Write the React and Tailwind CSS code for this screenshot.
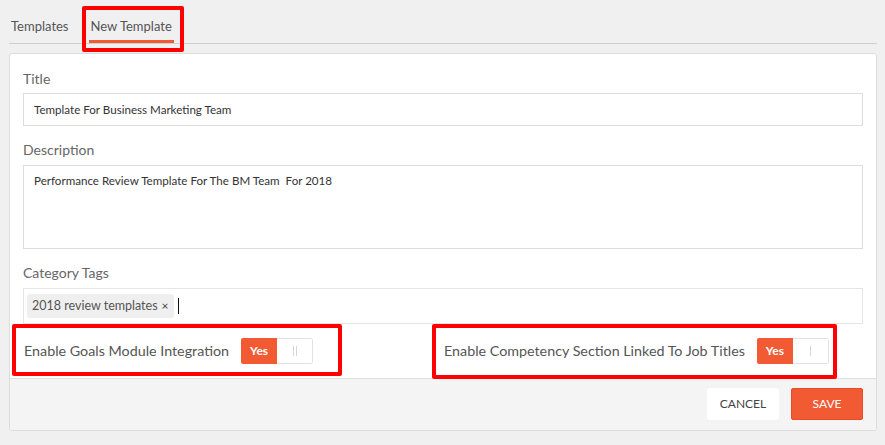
import React from "react";

const orange = "bg-[#f15a33]";

function Toggle({ double }) {
  return (
    <div className="flex h-[26px] w-[72px] rounded-[2px] overflow-hidden">
      <div className={`${orange} w-[36px] flex items-center justify-center text-white text-[12px] font-bold`}>
        Yes
      </div>
      <div className="flex-1 border border-l-0 border-[#e2e2e2] bg-white flex items-center justify-center gap-[2px] rounded-r-[2px]">
        <span className="block w-px h-[10px] bg-[#d6d6d6]" />
        {double && <span className="block w-px h-[10px] bg-[#d6d6d6]" />}
      </div>
    </div>
  );
}

export default function App() {
  return (
    <div
      className="relative h-[445px] w-[885px] bg-[#f0f0f0] pl-[9px] pr-[8px] text-[#555]"
      style={{ fontFamily: "Lato, 'Open Sans', sans-serif" }}
    >
      {/* tabs */}
      <div className="flex items-end h-[44px] border-b border-[#cfcfcf] gap-[18px]">
        <div className="px-[2px] pb-[8px] text-[13px] leading-[18px] text-[#555]">Templates</div>
        <div className="px-[2px] pb-[5px] text-[13px] leading-[18px] text-[#555] border-b-[3px] border-[#f15a33]">
          New Template
        </div>
      </div>

      {/* card */}
      <div className="mt-[9px] bg-white border border-[#ddd] rounded-[3px] overflow-hidden">
        <div className="px-[13px] pt-[16px]">
          <div className="text-[14px] leading-[18px] text-[#666] mb-[5px]">Title</div>
          <div className="h-[33px] border border-[#ddd] px-[10px] flex items-center text-[11.6px] text-[#333]">
            Template For Business Marketing Team
          </div>

          <div className="text-[14px] leading-[18px] text-[#666] mt-[15px] mb-[6px]">Description</div>
          <div className="h-[84px] border border-[#ddd] px-[10px] pt-[7px] text-[11.6px] leading-[16px] text-[#333]">
            Performance Review Template For The BM Team{"\u00a0"} For 2018
          </div>

          <div className="text-[14px] leading-[18px] text-[#666] mt-[15px] mb-[6px]">Category Tags</div>
          <div className="h-[36px] border border-[#e6e6e6] px-[3px] flex items-center gap-[4px]">
            <div className="h-[24px] bg-[#efefef] rounded-[3px] px-[5px] flex items-center gap-[4px] text-[12.5px] text-[#555]">
              2018 review templates <span className="text-[12px] text-[#444]">×</span>
            </div>
            <span className="block w-px h-[16px] bg-[#111]" />
          </div>

          <div className="grid grid-cols-2 h-[54px]">
            <div className="flex items-center gap-[12px] pl-[1px]">
              <span className="text-[14.3px] text-[#555]">Enable Goals Module Integration</span>
              <Toggle double />
            </div>
            <div className="flex items-center gap-[12px] pl-[1px]">
              <span className="text-[14.3px] text-[#555]">Enable Competency Section Linked To Job Titles</span>
              <Toggle />
            </div>
          </div>
        </div>

        {/* footer */}
        <div className="border-t border-[#e0e0e0] bg-[#f4f4f4] h-[52px] pt-[9px] px-[13px] flex justify-end items-start gap-[12px]">
          <button className="h-[32px] w-[72px] bg-white rounded-[3px] text-[12px] text-[#444]">CANCEL</button>
          <button className="h-[32px] w-[72px] bg-[#f15a33] border border-[#e84a22] rounded-[2px] text-[12px] text-white">
            SAVE
          </button>
        </div>
      </div>

      {/* annotation boxes */}
      <div className="absolute left-[82px] top-[6px] w-[102px] h-[46px] border-4 border-[#ff0000] rounded-[2px]" />
      <div className="absolute left-[12px] top-[324px] w-[330px] h-[52px] border-4 border-[#ff0000] rounded-[2px]" />
      <div className="absolute left-[432px] top-[324px] w-[405px] h-[55px] border-4 border-[#ff0000] rounded-[2px]" />
    </div>
  );
}
